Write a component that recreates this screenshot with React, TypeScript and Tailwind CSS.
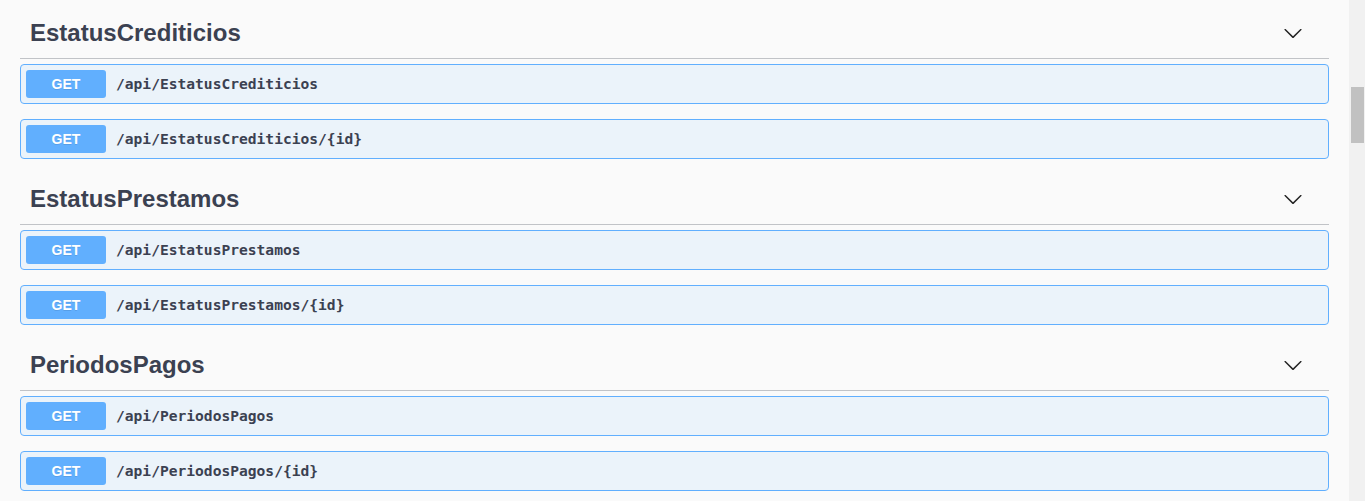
type Operation = {
  method: string;
  path: string;
};

type TagSection = {
  name: string;
  operations: Operation[];
};

const sections: TagSection[] = [
  {
    name: "EstatusCrediticios",
    operations: [
      { method: "GET", path: "/api/EstatusCrediticios" },
      { method: "GET", path: "/api/EstatusCrediticios/{id}" },
    ],
  },
  {
    name: "EstatusPrestamos",
    operations: [
      { method: "GET", path: "/api/EstatusPrestamos" },
      { method: "GET", path: "/api/EstatusPrestamos/{id}" },
    ],
  },
  {
    name: "PeriodosPagos",
    operations: [
      { method: "GET", path: "/api/PeriodosPagos" },
      { method: "GET", path: "/api/PeriodosPagos/{id}" },
    ],
  },
];

function ChevronDown() {
  return (
    <svg width="20" height="20" viewBox="0 0 20 20" className="block" aria-hidden="true">
      <path
        fill="#222"
        d="M17.418 6.109c.272-.268.709-.268.979 0s.271.701 0 .969l-7.908 7.83c-.27.268-.707.268-.979 0l-7.908-7.830c-.27-.268-.27-.701 0-.969.271-.268.709-.268.979 0L10 13.25l7.418-7.141z"
      />
    </svg>
  );
}

function OperationRow({ op }: { op: Operation }) {
  return (
    <div className="mb-[15px] rounded-[4px] border border-[#61affe] bg-[#ebf3fa]">
      <div className="flex items-center p-[5px]">
        <span className="flex h-[28px] min-w-[80px] items-center justify-center rounded-[3px] bg-[#61affe] px-[15px] font-['Liberation_Sans',Arial,sans-serif] text-[14px] font-bold text-white [text-shadow:0_1px_0_rgba(0,0,0,0.1)]">
          {op.method}
        </span>
        <span className="px-[10px] font-['DejaVu_Sans_Mono',monospace] text-[14.6px] font-bold text-[#3b4151]">
          {op.path}
        </span>
      </div>
    </div>
  );
}

function Section({ section }: { section: TagSection }) {
  return (
    <div>
      <div className="mb-[5px] flex h-[51px] items-center border-b border-[#c1c3c7] pl-[10px] pr-[26px]">
        <h3 className="flex-1 font-['Liberation_Sans',Arial,sans-serif] text-[24px] font-bold text-[#3b4151]">
          {section.name}
        </h3>
        <ChevronDown />
      </div>
      {section.operations.map((op) => (
        <OperationRow key={op.path} op={op} />
      ))}
    </div>
  );
}

export default function App() {
  return (
    <div className="flex h-[501px] w-full overflow-hidden bg-[#fafafa]">
      <div className="flex-1 px-[20px] pt-[8px]">
        {sections.map((s) => (
          <Section key={s.name} section={s} />
        ))}
      </div>
      <div className="w-[16px] shrink-0 bg-[#f1f1f1] pl-[2px] pr-[1px]">
        <div className="mt-[87px] h-[56px] bg-[#c1c1c1]" />
      </div>
    </div>
  );
}
